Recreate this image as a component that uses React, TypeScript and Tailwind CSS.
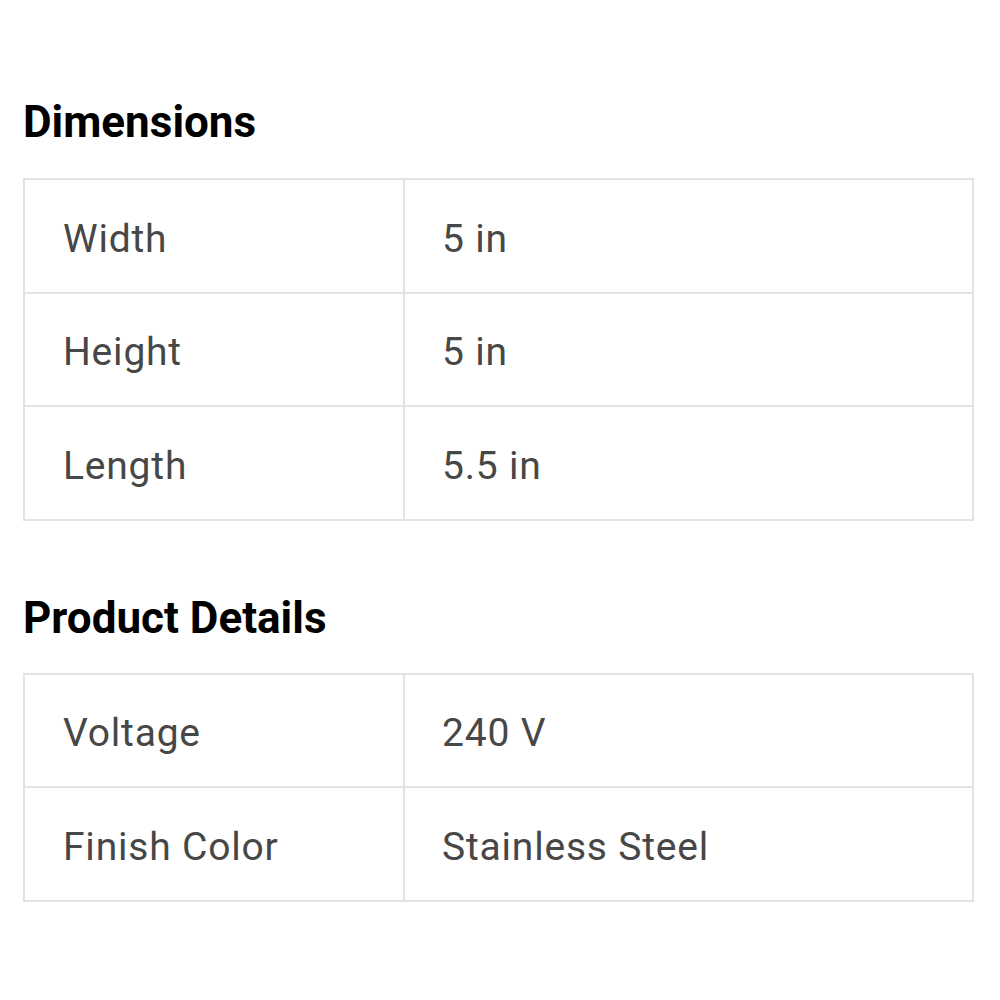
const dimensions = [
  { label: "Width", value: "5 in" },
  { label: "Height", value: "5 in" },
  { label: "Length", value: "5.5 in" },
];

const details = [
  { label: "Voltage", value: "240 V" },
  { label: "Finish Color", value: "Stainless Steel" },
];

function SpecTable({ rows }: { rows: { label: string; value: string }[] }) {
  return (
    <table className="w-[951px] border-collapse">
      <tbody>
        {rows.map((row) => (
          <tr key={row.label} className="h-[113.5px]">
            <td className="w-[380px] border-2 border-[#e3e3e3] pl-[38px] pt-[6px] align-middle text-[39px] tracking-[0.8px] text-[#474747]">
              {row.label}
            </td>
            <td className="border-2 border-[#e3e3e3] pl-[37px] pt-[6px] align-middle text-[39px] tracking-[0.8px] text-[#474747]">
              {row.value}
            </td>
          </tr>
        ))}
      </tbody>
    </table>
  );
}

export default function App() {
  return (
    <div className="min-h-[1000px] bg-white px-[23px] pt-[98px] font-['Roboto',sans-serif]">
      <h2 className="mb-[32px] text-[44px] font-bold leading-[48px] text-black">Dimensions</h2>
      <SpecTable rows={dimensions} />
      <h2 className="mb-[31px] mt-[73px] text-[44px] font-bold leading-[48px] text-black">
        Product Details
      </h2>
      <SpecTable rows={details} />
    </div>
  );
}
